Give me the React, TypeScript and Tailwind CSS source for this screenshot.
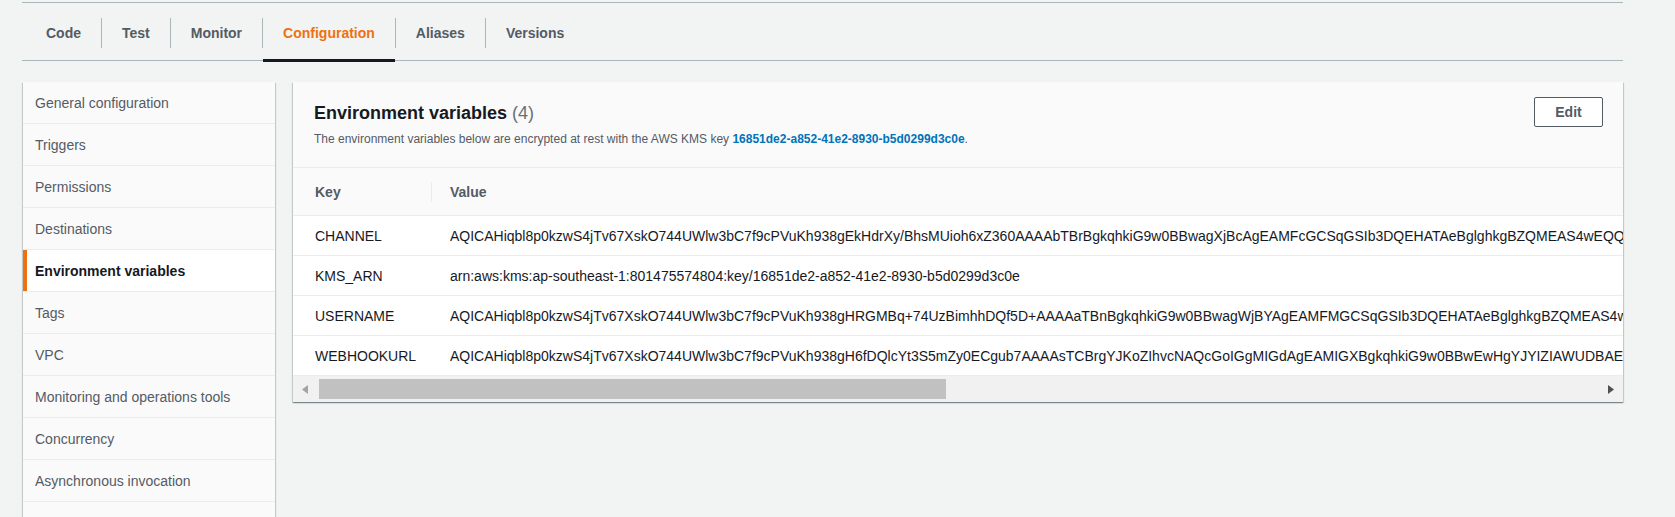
// Lambda console — Configuration tab, environment variables panel.

const tabs = ['Code', 'Test', 'Monitor', 'Configuration', 'Aliases', 'Versions']

const navItems = [
  'General configuration',
  'Triggers',
  'Permissions',
  'Destinations',
  'Environment variables',
  'Tags',
  'VPC',
  'Monitoring and operations tools',
  'Concurrency',
  'Asynchronous invocation',
  '',
]

const vars = [
  {
    key: 'CHANNEL',
    value:
      'AQICAHiqbl8p0kzwS4jTv67XskO744UWlw3bC7f9cPVuKh938gEkHdrXy/BhsMUioh6xZ360AAAAbTBrBgkqhkiG9w0BBwagXjBcAgEAMFcGCSqGSIb3DQEHATAeBglghkgBZQMEAS4wEQQM',
  },
  {
    key: 'KMS_ARN',
    value: 'arn:aws:kms:ap-southeast-1:801475574804:key/16851de2-a852-41e2-8930-b5d0299d3c0e',
  },
  {
    key: 'USERNAME',
    value:
      'AQICAHiqbl8p0kzwS4jTv67XskO744UWlw3bC7f9cPVuKh938gHRGMBq+74UzBimhhDQf5D+AAAAaTBnBgkqhkiG9w0BBwagWjBYAgEAMFMGCSqGSIb3DQEHATAeBglghkgBZQMEAS4wE',
  },
  {
    key: 'WEBHOOKURL',
    value:
      'AQICAHiqbl8p0kzwS4jTv67XskO744UWlw3bC7f9cPVuKh938gH6fDQlcYt3S5mZy0ECgub7AAAAsTCBrgYJKoZIhvcNAQcGoIGgMIGdAgEAMIGXBgkqhkiG9w0BBwEwHgYJYIZIAWUDBAEuM',
  },
]

const shadow =
  'shadow-[0_1px_1px_0_rgba(0,28,36,0.3),1px_1px_1px_0_rgba(0,28,36,0.15),-1px_1px_1px_0_rgba(0,28,36,0.15)]'

export default function App() {
  return (
    <div className="h-[517px] overflow-hidden bg-[#f2f3f3] font-['Liberation_Sans',Arial,sans-serif] text-[14px] text-[#16191f]">
      <div className="ml-[22px] w-[1601px]">
        {/* bottom edge of the panel above */}
        <div className="h-[2px]" />
        <div className="border-t border-[#aab7b8]" />

        {/* Tabs */}
        <div className="flex h-[58px] items-center border-b border-[#aab7b8] pl-[4px]">
          {tabs.map((t, i) => (
            <div key={t} className="flex h-full items-center">
              {i > 0 && <span className="mt-[2px] h-[30px] w-px bg-[#aab7b8]" />}
              <div
                className={
                  'relative flex h-full items-center px-5 pt-[3px] font-bold ' +
                  (t === 'Configuration' ? 'text-[#ec7211]' : 'text-[#545b64]')
                }
              >
                {t}
                {t === 'Configuration' && (
                  <span className="absolute -bottom-[2px] left-0 right-0 h-[3px] bg-[#16191f]" />
                )}
              </div>
            </div>
          ))}
        </div>

        <div className="mt-[21px] flex gap-[18px]">
          {/* Side nav */}
          <div className={'ml-px w-[252px] shrink-0 bg-white ' + shadow}>
            {navItems.map((n, i) => {
              const active = n === 'Environment variables'
              return (
                <div
                  key={i}
                  className={
                    'flex h-[42px] items-center border-b border-[#eaeded] ' +
                    (active ? 'bg-white' : 'bg-[#fafafa]')
                  }
                >
                  <span className={'h-full w-[4px] ' + (active ? 'bg-[#ec7211]' : '')} />
                  <span
                    className={
                      'pl-[8px] pt-[2px] ' + (active ? 'font-bold text-[#16191f]' : 'text-[#545b64]')
                    }
                  >
                    {n}
                  </span>
                </div>
              )
            })}
          </div>

          {/* Card */}
          <div className={'w-[1330px] self-start bg-white ' + shadow}>
            <div className="flex items-start justify-between border-b border-[#eaeded] bg-[#fafafa] pb-[20px] pl-[21px] pr-[20px] pt-[15px]">
              <div className="pt-[5px]">
                <h2 className="text-[18px] leading-[22px] font-bold text-[#16191f]">
                  Environment variables <span className="font-normal text-[#687078]">(4)</span>
                </h2>
                <p className="mt-[7px] text-[12px] leading-[16px] text-[#545b64]">
                  The environment variables below are encrypted at rest with the AWS KMS key{' '}
                  <span className="font-bold text-[#0073bb]">16851de2-a852-41e2-8930-b5d0299d3c0e</span>.
                </p>
              </div>
              <button className="flex h-[30px] w-[69px] items-center justify-center rounded-[2px] border border-[#545b64] bg-white font-bold text-[#545b64]">
                Edit
              </button>
            </div>

            {/* Table */}
            <div className="overflow-hidden">
              <div className="flex h-[48px] items-center border-b border-[#eaeded] bg-[#fafafa] pt-[1px] font-bold text-[#545b64]">
                <div className="flex w-[139px] shrink-0 items-center justify-between pl-[22px]">
                  <span>Key</span>
                  <span className="h-[20px] w-px bg-[#eaeded]" />
                </div>
                <span className="pl-[18px]">Value</span>
              </div>
              {vars.map((v) => (
                <div
                  key={v.key}
                  className="flex h-[40px] items-center border-b border-[#eaeded] pt-[2px] whitespace-nowrap"
                >
                  <span className="w-[139px] shrink-0 pl-[22px] text-[#16191f]">{v.key}</span>
                  <span className="pl-[18px] text-[#16191f]">{v.value}</span>
                </div>
              ))}
            </div>

            {/* Horizontal scrollbar */}
            <div className="flex h-[26px] items-center bg-[#f1f1f1]">
              <div className="flex h-full w-[24px] items-center justify-center">
                <svg width="6" height="9" viewBox="0 0 6 9">
                  <path d="M6 0 L0 4.5 L6 9 Z" fill="#a3a3a3" />
                </svg>
              </div>
              <div className="flex h-full flex-1 items-center">
                <div className="ml-[2px] h-[20px] w-[627px] bg-[#c1c1c1]" />
              </div>
              <div className="flex h-full w-[24px] items-center justify-center">
                <svg width="6" height="9" viewBox="0 0 6 9">
                  <path d="M0 0 L6 4.5 L0 9 Z" fill="#505050" />
                </svg>
              </div>
            </div>
          </div>
        </div>
      </div>
    </div>
  )
}
